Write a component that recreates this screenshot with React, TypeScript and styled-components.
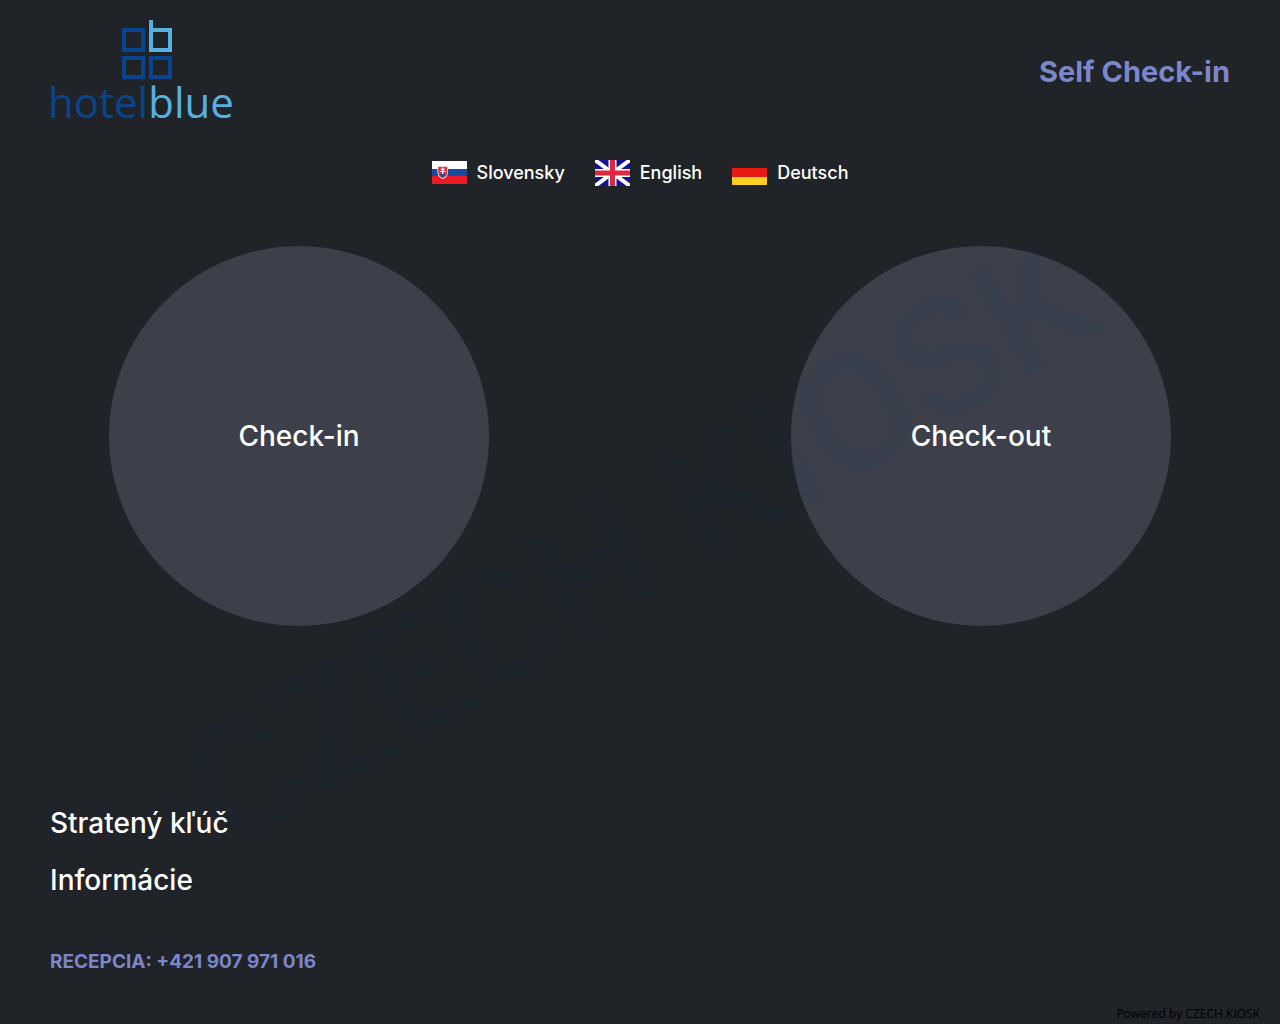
import React from "react";
import styled, { createGlobalStyle } from "styled-components";

const colors = {
  page: "#202328",
  circle: "#3d404b",
  accent: "#7b87c9",
  navy: "#08458f",
  sky: "#56b0e0",
};

const GlobalStyle = createGlobalStyle`
  *, *::before, *::after { box-sizing: border-box; }
  body {
    margin: 0;
    background: ${colors.page};
    color: #fff;
    font-family: Inter, "Open Sans", sans-serif;
  }
`;

const Page = styled.div`
  position: relative;
  display: flex;
  flex-direction: column;
  min-height: 100vh;
  overflow: hidden;
`;

const Header = styled.header`
  display: flex;
  align-items: center;
  justify-content: space-between;
  padding: 20px 50px 20px 48px;
`;

const Brand = styled.a`
  display: flex;
  flex-direction: column;
  align-items: center;
  color: ${colors.navy};
  text-decoration: none;
`;

const BrandMark = styled.svg`
  display: block;
  width: 64px;
  height: 60px;
`;

const BrandName = styled.span`
  font: 400 42px/44px "Open Sans", "Noto Sans", sans-serif;
`;

const BrandAccent = styled.span`
  color: ${colors.sky};
`;

const Title = styled.h1`
  margin: 0;
  color: ${colors.accent};
  font-size: 29px;
  font-weight: 700;
  line-height: 40px;
`;

const Languages = styled.nav`
  display: flex;
  flex-wrap: wrap;
  justify-content: center;
  gap: 30px;
  padding: 14px 50px;
`;

const LanguageButton = styled.button`
  display: flex;
  align-items: center;
  gap: 10px;
  padding: 0;
  border: 0;
  background: none;
  color: inherit;
  font: 500 18px/30px Inter, sans-serif;
  cursor: pointer;
`;

const Flag = styled.svg`
  display: block;
  width: 35px;
  height: 26px;
`;

const Actions = styled.main`
  padding: 44px 50px;
`;

const CircleRow = styled.div`
  display: flex;
  flex-wrap: wrap;
  justify-content: space-between;
  gap: 40px;
  padding: 0 5%;
`;

const CircleButton = styled.button`
  width: 380px;
  aspect-ratio: 1;
  padding: 0;
  border: 0;
  border-radius: 50%;
  background: ${colors.circle};
  color: inherit;
  font: 500 28px/40px Inter, sans-serif;
  cursor: pointer;
`;

const Footer = styled.footer`
  display: flex;
  flex-direction: column;
  align-items: flex-start;
  margin-top: auto;
  padding: 0 50px 29px;
`;

const FooterButton = styled.button`
  margin-bottom: 17px;
  padding: 0;
  border: 0;
  background: none;
  color: inherit;
  font: 500 28px/40px Inter, sans-serif;
  cursor: pointer;
`;

const Reception = styled.p`
  margin: 30px 0 0;
  color: ${colors.accent};
  font-size: 19px;
  font-weight: 700;
  line-height: 30px;
`;

const PoweredBy = styled.small`
  align-self: flex-end;
  padding: 0 20px 2px;
  color: #000;
  font: 400 12px/16px "Open Sans", "Noto Sans", sans-serif;
`;

const Watermark = styled.div`
  position: absolute;
  inset: 64px 0 0;
  display: flex;
  align-items: center;
  justify-content: center;
  color: rgba(0, 50, 100, 0.08);
  font: 500 163px/200px Roboto, sans-serif;
  white-space: nowrap;
  transform: rotate(-31deg);
  pointer-events: none;
`;

const SlovakFlag = () => (
  <Flag viewBox="0 0 35 26" aria-hidden="true">
    <path fill="#fff" d="M0 1h35v8H0z" />
    <path fill="#164c9f" d="M0 9h35v7H0z" />
    <path fill="#e91c28" d="M0 16h35v8H0z" />
    <path fill="#fff" d="M5.500 6h10.500v6q0 5-5.250 7Q5.500 17 5.500 12z" />
    <path fill="#e0303c" d="M6.200 6.700h9.100v5.300q0 4.200-4.550 6.100Q6.200 16.200 6.200 12z" />
    <path fill="#234f9e" d="M7.200 15q1.400-1.800 2.300-1.200 1.200-1.500 2.500 0 1-.600 2.300 1.200-1.200 1.800-3.550 2.800Q8.400 16.800 7.200 15z" />
    <path stroke="#fff" strokeWidth="1.200" d="M10.750 7.500v6.500M8.700 9.300h4.100M8 11.500h5.500" />
  </Flag>
);

const BritishFlag = () => (
  <Flag viewBox="0 0 35 26" aria-hidden="true">
    <path fill="#12129a" d="M0 0h35v26H0z" />
    <path stroke="#fff" strokeWidth="4" d="m0 0 35 26M35 0 0 26" />
    <path stroke="#fff" strokeWidth="8" d="M17.500 0v26M0 13h35" />
    <path stroke="#dc2840" strokeWidth="5" d="M17.500 0v26M0 13h35" />
  </Flag>
);

const GermanFlag = () => (
  <Flag viewBox="0 0 35 26" aria-hidden="true">
    <path fill="#272425" d="M0 1h35v8H0z" />
    <path fill="#e81a12" d="M0 8h35v9H0z" />
    <path fill="#ffd01f" d="M0 17h35v7q0 1-1 1H1q-1 0-1-1z" />
  </Flag>
);

const languages = [
  { name: "Slovensky", lang: "sk", Icon: SlovakFlag },
  { name: "English", lang: "en", Icon: BritishFlag },
  { name: "Deutsch", lang: "de", Icon: GermanFlag },
];

export default function App() {
  return (
    <Page lang="sk">
      <GlobalStyle />
      <Header>
        <Brand href="#">
          <BrandMark viewBox="-12 0 64 60" fill="none" strokeWidth="4" aria-hidden="true">
            <path stroke={colors.navy} d="M3 10h19v20H3zM3 38h19v19H3zM30 38h19v19H30z" />
            <path stroke={colors.sky} d="M30 0v30h19V10H30" />
          </BrandMark>
          <BrandName>
            hotel<BrandAccent>blue</BrandAccent>
          </BrandName>
        </Brand>
        <Title>Self Check-in</Title>
      </Header>
      <Languages>
        {languages.map(({ name, lang, Icon }) => (
          <LanguageButton key={lang} lang={lang} type="button">
            <Icon />
            {name}
          </LanguageButton>
        ))}
      </Languages>
      <Actions>
        <CircleRow>
          <CircleButton type="button">Check-in</CircleButton>
          <CircleButton type="button">Check-out</CircleButton>
        </CircleRow>
      </Actions>
      <Footer>
        <FooterButton type="button">Stratený kľúč</FooterButton>
        <FooterButton type="button">Informácie</FooterButton>
        <Reception>RECEPCIA: +421 907 971 016</Reception>
      </Footer>
      <PoweredBy>Powered by CZECH KIOSK</PoweredBy>
      <Watermark aria-hidden="true">CZECH KIOSK</Watermark>
    </Page>
  );
}
